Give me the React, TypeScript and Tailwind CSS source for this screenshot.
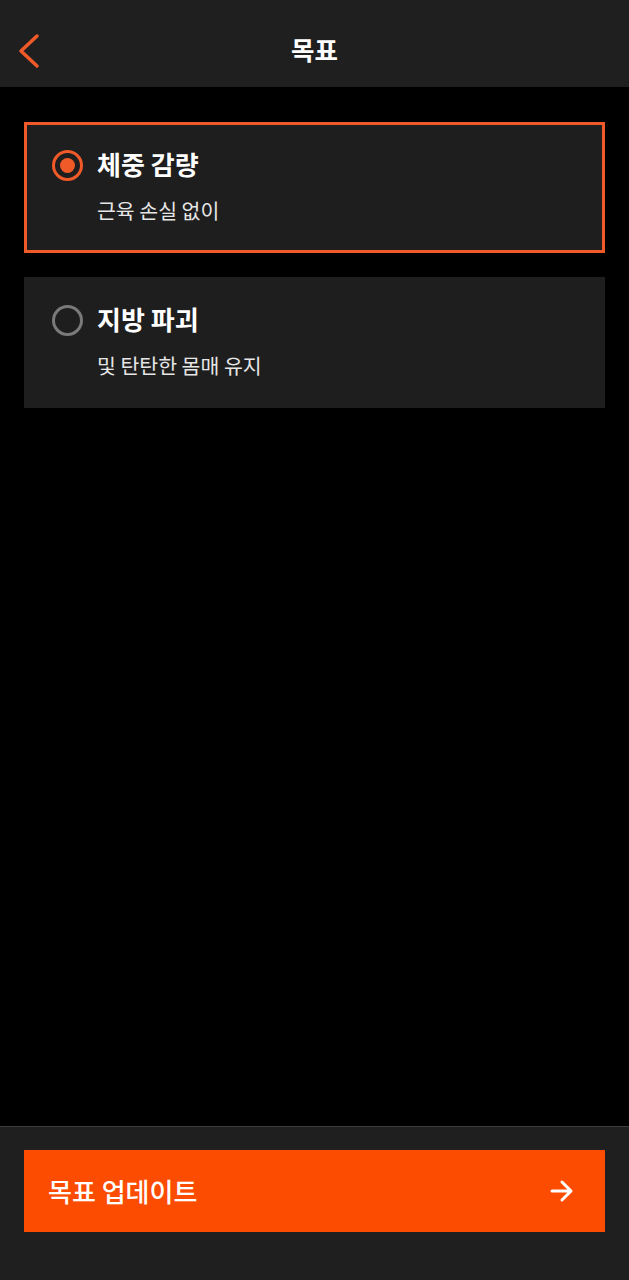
import { useState } from 'react';

const goals = [
  { id: 'weight', title: '체중 감량', desc: '근육 손실 없이' },
  { id: 'fat', title: '지방 파괴', desc: '및 탄탄한 몸매 유지' },
];

export default function App() {
  const [selected, setSelected] = useState('weight');
  return (
    <div
      className="flex flex-col h-[1280px] w-[629px] bg-black text-white"
      style={{ fontFamily: '"Noto Sans CJK KR", "Noto Sans", sans-serif' }}
    >
      <Header />
      <div className="flex flex-col gap-6 flex-1 px-6 pt-[35px]">
        {goals.map((g) => (
          <GoalCard
            key={g.id}
            title={g.title}
            desc={g.desc}
            active={selected === g.id}
            onClick={() => setSelected(g.id)}
          />
        ))}
      </div>
      <Footer />
    </div>
  );
}

const Header = () => {
  return (
    <header className="relative flex items-center justify-center h-[87px] bg-[#1f1f1f]">
      <button className="absolute left-[16px] top-[33px]">
        <svg width="26" height="36" viewBox="0 0 26 36" fill="none">
          <path
            d="M21 3L5 18l16 15"
            stroke="#f05a28"
            strokeWidth="3.5"
            strokeLinecap="round"
            strokeLinejoin="round"
          />
        </svg>
      </button>
      <h1 className="text-[25.5px] font-bold leading-none mt-[11px]">목표</h1>
    </header>
  );
};

const GoalCard = ({
  title,
  desc,
  active,
  onClick,
}: {
  title: string;
  desc: string;
  active: boolean;
  onClick: () => void;
}) => {
  return (
    <button
      onClick={onClick}
      className={`flex items-start h-[131px] w-full text-left bg-[#1e1e1e] pl-[25px] pt-[25px] border-[3px] ${
        active ? 'border-[#f05a28]' : 'border-[#1e1e1e]'
      }`}
    >
      <div
        className={`flex items-center justify-center shrink-0 w-[31px] h-[31px] rounded-full border-[3px] ${
          active ? 'border-[#f05a28]' : 'border-[#7a7a7a]'
        }`}
      >
        {active && <div className="w-[15px] h-[15px] rounded-full bg-[#f05a28]" />}
      </div>
      <div className="flex flex-col ml-[14px]">
        <div className="text-[26px] font-bold leading-[30px] -mt-[1px]">{title}</div>
        <div className="text-[20.5px] leading-[24px] mt-[19px] text-[#e6e6e6]">{desc}</div>
      </div>
    </button>
  );
};

const Footer = () => {
  return (
    <footer className="h-[154px] bg-[#1f1f1f] border-t border-[#3c3c3c] px-6 pt-[23px]">
      <button className="flex items-center justify-between w-full h-[82px] bg-[#fc4c02] pl-[24px] pr-[30px]">
        <span className="text-[26px] font-medium leading-none">목표 업데이트</span>
        <svg width="26" height="26" viewBox="0 0 26 26" fill="none">
          <path
            d="M3 13h19M13 4l9 9-9 9"
            stroke="white"
            strokeWidth="3"
            strokeLinecap="round"
            strokeLinejoin="round"
          />
        </svg>
      </button>
    </footer>
  );
};
